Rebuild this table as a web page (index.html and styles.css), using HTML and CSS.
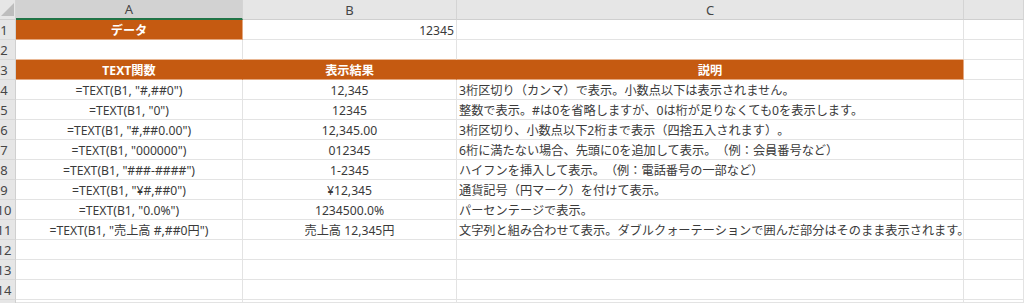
FILE: index.html
```html
<!DOCTYPE html>
<html lang="ja">
<head>
<meta charset="utf-8">
<link rel="stylesheet" href="styles.css">
</head>
<body>
<div class="sheet">
  <div class="hd corner"><span class="tri"></span></div>
  <div class="hd col sel">A</div>
  <div class="hd col">B</div>
  <div class="hd col">C</div>
  <div class="hd col"></div>

  <div class="rh"><span>1</span></div>
  <div class="c ctr org bold org-end">データ</div>
  <div class="c right">12345</div>
  <div class="c"></div>
  <div class="c"></div>

  <div class="rh"><span>2</span></div>
  <div class="c o-above"></div>
  <div class="c o-above"></div>
  <div class="c o-above"></div>
  <div class="c"></div>

  <div class="rh"><span>3</span></div>
  <div class="c ctr org bold">TEXT関数</div>
  <div class="c ctr org bold">表示結果</div>
  <div class="c ctr org bold org-end">説明</div>
  <div class="c"></div>

  <div class="rh"><span>4</span></div>
  <div class="c ctr">=TEXT(B1, "#,##0")</div>
  <div class="c ctr">12,345</div>
  <div class="c left">3桁区切り（カンマ）で表示。小数点以下は表示されません。</div>
  <div class="c"></div>

  <div class="rh"><span>5</span></div>
  <div class="c ctr">=TEXT(B1, "0")</div>
  <div class="c ctr">12345</div>
  <div class="c left">整数で表示。#は0を省略しますが、0は桁が足りなくても0を表示します。</div>
  <div class="c"></div>

  <div class="rh"><span>6</span></div>
  <div class="c ctr">=TEXT(B1, "#,##0.00")</div>
  <div class="c ctr">12,345.00</div>
  <div class="c left">3桁区切り、小数点以下2桁まで表示（四捨五入されます）。</div>
  <div class="c"></div>

  <div class="rh"><span>7</span></div>
  <div class="c ctr">=TEXT(B1, "000000")</div>
  <div class="c ctr">012345</div>
  <div class="c left">6桁に満たない場合、先頭に0を追加して表示。（例：会員番号など）</div>
  <div class="c"></div>

  <div class="rh"><span>8</span></div>
  <div class="c ctr">=TEXT(B1, "###-####")</div>
  <div class="c ctr">1-2345</div>
  <div class="c left">ハイフンを挿入して表示。（例：電話番号の一部など）</div>
  <div class="c"></div>

  <div class="rh"><span>9</span></div>
  <div class="c ctr">=TEXT(B1, "¥#,##0")</div>
  <div class="c ctr">¥12,345</div>
  <div class="c left">通貨記号（円マーク）を付けて表示。</div>
  <div class="c"></div>

  <div class="rh"><span>10</span></div>
  <div class="c ctr">=TEXT(B1, "0.0%")</div>
  <div class="c ctr">1234500.0%</div>
  <div class="c left">パーセンテージで表示。</div>
  <div class="c"></div>

  <div class="rh"><span>11</span></div>
  <div class="c ctr">=TEXT(B1, "売上高 #,##0円")</div>
  <div class="c ctr">売上高 12,345円</div>
  <div class="c left overflow">文字列と組み合わせて表示。ダブルクォーテーションで囲んだ部分はそのまま表示されます。</div>
  <div class="c"></div>

  <div class="rh"><span>12</span></div>
  <div class="c"></div><div class="c"></div><div class="c"></div><div class="c"></div>

  <div class="rh"><span>13</span></div>
  <div class="c"></div><div class="c"></div><div class="c"></div><div class="c"></div>

  <div class="rh"><span>14</span></div>
  <div class="c"></div><div class="c"></div><div class="c"></div><div class="c"></div>

  <div class="rh rh-last"></div>
  <div class="c"></div><div class="c"></div><div class="c"></div><div class="c"></div>
</div>
</body>
</html>
```

FILE: styles.css
```css
html, body {
  margin: 0;
  padding: 0;
  background: #ffffff;
  overflow: hidden;
}

body {
  width: 1024px;
  height: 303px;
  font-family: "Noto Sans", "Noto Sans CJK JP", sans-serif;
  font-size: 12.2px;
  color: #3a3a3a;
  text-spacing-trim: space-all;
}

.sheet {
  display: grid;
  grid-template-columns: 16px 227px 214px 507px 1fr;
  grid-template-rows: 20px repeat(14, 20px) 3px;
  width: 1024px;
  height: 303px;
  overflow: hidden;
}

.hd {
  box-sizing: border-box;
  background: #e6e6e6;
  border-right: 1px solid #d4d4d4;
  border-bottom: 1px solid #cfcfcf;
  color: #454545;
  font-size: 13px;
  display: flex;
  align-items: center;
  justify-content: center;
}

.corner {
  justify-content: flex-end;
  align-items: flex-end;
  padding: 0 1px 3px 0;
}

.tri {
  width: 0;
  height: 0;
  border-left: 13px solid transparent;
  border-bottom: 13px solid #bdbdbd;
}

.col.sel {
  background: #d2d2d2;
  border-bottom: 2px solid #217346;
}

.rh {
  box-sizing: border-box;
  background: #e6e6e6;
  border-right: 1px solid #d0d0d0;
  border-bottom: 1px solid #d9d9d9;
  color: #454545;
  font-size: 13px;
  overflow: hidden;
  display: flex;
  align-items: center;
}

.rh-last { border-bottom: 0; }

.rh span {
  flex: none;
  width: 30px;
  margin-left: -11px;
  text-align: center;
}

.c {
  box-sizing: border-box;
  border-right: 1px solid #e3e3e3;
  border-bottom: 1px solid #e3e3e3;
  display: flex;
  align-items: center;
  white-space: nowrap;
  min-width: 0;
  padding-top: 1px;
}

.ctr { justify-content: center; }
.right { justify-content: flex-end; padding-right: 2px; }
.left { padding-left: 2px; }
.overflow { overflow: visible; position: relative; z-index: 1; }

.org {
  background: #c55a11;
  color: #ffffff;
  border-right-color: #c55a11;
  border-bottom-color: #e3a77f;
}

.org-end { border-right-color: #e3a77f; }

.o-above { border-bottom-color: #e9b794; }

.bold { font-weight: 700; }
```
